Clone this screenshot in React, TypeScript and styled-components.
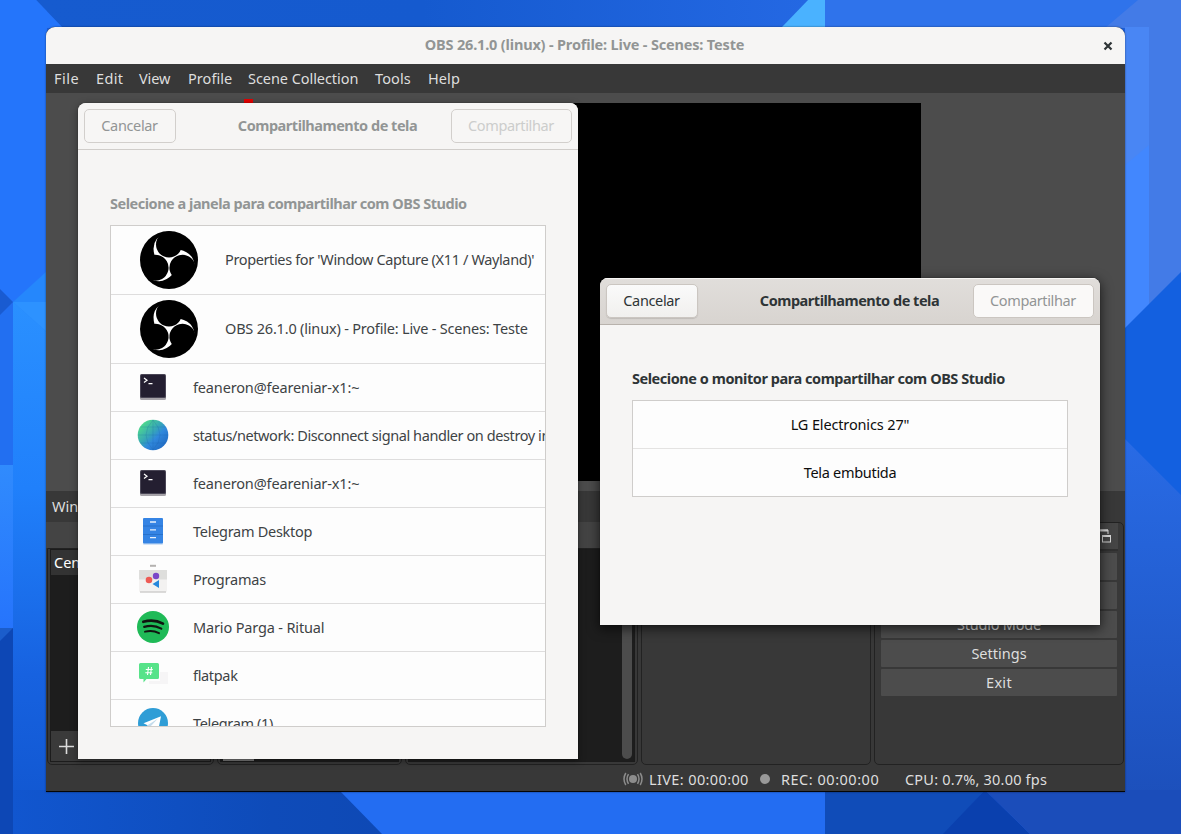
import React from 'react';
import styled, { createGlobalStyle } from 'styled-components';

const Global = createGlobalStyle`
  * { box-sizing: border-box; }
  html, body { margin: 0; padding: 0; overflow: hidden; }
  body { font-family: "Noto Sans", "Open Sans", sans-serif; font-size: 14.5px; }
`;

const Desktop = styled.main`
  position: relative;
  width: 1181px;
  height: 834px;
  overflow: hidden;
  padding: 27px 56px 42px 46px;
  background: #1c5fdc;
`;

const Wallpaper = styled.svg`
  position: absolute;
  inset: 0;
  width: 1181px;
  height: 834px;
`;

const Label = styled.span<{ $ls?: number }>`
  white-space: nowrap;
  letter-spacing: ${(p) => p.$ls ?? 0}px;
`;

/* ---------- main window ---------- */

const MainWindow = styled.section`
  position: relative;
  display: flex;
  flex-direction: column;
  width: 1079px;
  height: 765px;
  border-radius: 9px 9px 0 0;
  overflow: hidden;
  background: #383838;
  border-bottom: 1px solid #050505;
  box-shadow: 0 0 2px rgba(0, 0, 0, 0.55);
`;

const TitleBar = styled.header`
  display: flex;
  align-items: center;
  justify-content: center;
  position: relative;
  height: 37px;
  flex: none;
  background: #f6f5f4;
  color: #929595;
  font: 700 14.5px/20px "Noto Sans", sans-serif;
  padding-bottom: 3px;
  padding-right: 2px;
`;

const CloseButton = styled.button`
  position: absolute;
  right: 7px;
  top: 9px;
  width: 20px;
  height: 20px;
  padding: 0;
  border: 0;
  background: none;
  display: grid;
  place-items: center;
`;

const MenuBar = styled.nav`
  display: flex;
  align-items: center;
  gap: 17px;
  height: 29px;
  flex: none;
  padding: 0 0 2px 8px;
  background: #383838;
  color: #dedede;
  font-size: 14.5px;
`;

const MenuItem = styled.span<{ $w: number; $ls: number }>`
  width: ${(p) => p.$w}px;
  letter-spacing: ${(p) => p.$ls}px;
  white-space: nowrap;
`;

const Preview = styled.div`
  flex: none;
  height: 398px;
  padding: 10px 0 0 203px;
  background: #4c4c4c;
`;

const Scene = styled.div`
  position: relative;
  width: 672px;
  height: 378px;
  background: #000;
`;

const Handle = styled.i`
  position: absolute;
  left: -5px;
  top: -4px;
  width: 9px;
  height: 8px;
  background: #e60000;
`;

const SourceBar = styled.div`
  flex: none;
  height: 31px;
  padding: 5px 6px;
  background: #383838;
  color: #dedede;
  line-height: 21px;
`;

const Docks = styled.div`
  flex: none;
  display: flex;
  gap: 3px;
  height: 243px;
  padding: 0 2px 0 1px;
`;

const Dock = styled.div<{ $w: number }>`
  display: flex;
  flex-direction: column;
  flex: none;
  width: ${(p) => p.$w}px;
`;

const DockTitle = styled.div`
  flex: none;
  height: 26px;
  margin: 0 -3px 0 -3px;
  background: #444;
`;

const DockFrame = styled.div`
  display: flex;
  flex: 1;
  border: 1px solid #222;
  border-radius: 0 0 5px 5px;
  padding: 0 2px 2px;
  background: #383838;
`;

const DockInner = styled.div`
  display: flex;
  flex-direction: column;
  justify-content: space-between;
  flex: 1;
  border: 1px solid #1c1c1c;
  background: #1d1d1d;
  overflow: hidden;
`;

const SceneItem = styled.div`
  height: 25px;
  padding-left: 3px;
  background: #333;
  color: #fff;
  line-height: 25px;
  white-space: nowrap;
`;

const DockTools = styled.div`
  display: flex;
  align-items: center;
  height: 30px;
  padding: 1px 0 0 7px;
  background: #3a3a3a;
`;

const MixerInner = styled(DockInner)`
  flex-direction: row;
  justify-content: flex-end;
  align-items: flex-end;
  padding: 0 2px 2px 0;
`;

const Scrollbar = styled.div`
  width: 10px;
  height: 100%;
  background: #4c4c4c;
  border-radius: 0 0 5px 5px;
`;

const SourcesInner = styled(DockInner)`
  justify-content: flex-end;
  padding-left: 2px;
`;

const HorizontalBar = styled.div`
  width: 31px;
  height: 3px;
  background: #777;
`;

const ControlsDock = styled.div`
  width: 250px;
  flex: none;
  border: 1px solid #222;
  border-radius: 5px;
  display: flex;
  flex-direction: column;
  gap: 2px;
  padding: 0 6px;
`;

const ControlsTitle = styled.div`
  display: flex;
  align-items: center;
  justify-content: flex-end;
  height: 28px;
  margin: 0 -1px 0 -6px;
  padding-right: 6px;
  background: #454545;
  border-bottom: 2px solid #303030;
`;

const ControlButton = styled.button`
  flex: none;
  height: 27px;
  padding: 0 0 1px;
  border: 0;
  border-radius: 1px;
  background: #4c4c4c;
  color: #dedede;
  font: 14.5px/26px "Noto Sans", sans-serif;
`;

const StatusBar = styled.footer`
  display: flex;
  align-items: center;
  flex: 1;
  padding: 1px 0 0 577px;
  color: #dedede;
  font-size: 14.5px;
`;

const StatusItem = styled.span<{ $w: number; $ls: number }>`
  width: ${(p) => p.$w}px;
  letter-spacing: ${(p) => p.$ls}px;
  white-space: nowrap;
  > svg { display: block; }
`;

const RecordDot = styled.i`
  width: 10px;
  height: 10px;
  border-radius: 50%;
  margin-right: 11px;
  background: #999;
`;

/* ---------- dialogs ---------- */

const Dialog = styled.section<{ $x: number; $y: number; $h: number; $active?: boolean }>`
  position: absolute;
  left: ${(p) => p.$x}px;
  top: ${(p) => p.$y}px;
  width: 500px;
  height: ${(p) => p.$h}px;
  display: flex;
  flex-direction: column;
  overflow: hidden;
  border-radius: 8px 8px 0 0;
  background: #f6f5f4;
  color: ${(p) => (p.$active ? '#2e3436' : '#929595')};
  box-shadow: ${(p) =>
    p.$active
      ? '0 3px 12px 1px rgba(0,0,0,.6), 0 0 1px rgba(0,0,0,.8)'
      : '0 2px 7px 1px rgba(0,0,0,.3), 0 0 1px rgba(0,0,0,.7)'};
`;

const DialogBar = styled.header<{ $active?: boolean }>`
  display: grid;
  grid-template-columns: 121px 1fr 121px;
  align-items: center;
  justify-items: center;
  flex: none;
  height: 47px;
  padding: 0 6px;
  background: ${(p) => (p.$active ? 'linear-gradient(#e1dedb, #d8d4d0)' : '#f6f5f4')};
  border-bottom: 1px solid ${(p) => (p.$active ? '#b8b2ac' : '#d0cdca')};
  box-shadow: ${(p) => (p.$active ? 'inset 0 1px #f6f5f3' : 'none')};
`;

const DialogTitle = styled.h1`
  margin: 0 1px 2px 0;
  font: 700 14.5px/20px "Noto Sans", sans-serif;
  letter-spacing: -0.48px;
  white-space: nowrap;
`;

const Button = styled.button<{ $w: number; $active?: boolean; $off?: boolean }>`
  justify-self: start;
  width: ${(p) => p.$w}px;
  height: 34px;
  padding: 0 1px 2px 0;
  border-radius: 5px;
  border: 1px solid ${(p) => (p.$active ? '#cbc6c1' : '#d2cfcc')};
  background: ${(p) =>
    !p.$active ? '#f7f6f5' : p.$off ? '#faf9f8' : 'linear-gradient(#fafafa, #f1f0ee)'};
  box-shadow: ${(p) => (p.$active && !p.$off ? '0 1px 1px rgba(0,0,0,.12)' : 'none')};
  color: ${(p) => (p.$active ? (p.$off ? '#929595' : '#2e3436') : p.$off ? '#cccdcc' : '#929595')};
  font: 14.5px/20px "Noto Sans", sans-serif;
  letter-spacing: -0.36px;
`;

const DialogBody = styled.div`
  display: flex;
  flex-direction: column;
  flex: 1;
  padding: 43px 32px 32px;
`;

const Heading = styled.h2`
  margin: 0 0 11px;
  font: 700 14.5px/21px "Noto Sans", sans-serif;
  white-space: nowrap;
`;

const List = styled.ul<{ $h: number; $w: number }>`
  flex: none;
  list-style: none;
  margin: 0;
  padding: 0;
  width: ${(p) => p.$w}px;
  height: ${(p) => p.$h}px;
  overflow: hidden;
  background: #fdfdfd;
  border: 1px solid #cfcdcb;
`;

const WindowRow = styled.li<{ $large?: boolean }>`
  display: flex;
  align-items: center;
  gap: 24px;
  height: ${(p) => (p.$large ? 69 : 48)}px;
  padding: 0 0 2px 26px;
  border-bottom: 1px solid #dedddd;
  color: #3e4345;
  line-height: 20px;
  > svg { flex: none; }
`;

const MonitorRow = styled.li`
  display: flex;
  align-items: center;
  justify-content: center;
  height: 48px;
  padding-bottom: 2px;
  color: #0d0d0d;
  line-height: 20px;
  &:first-child { border-bottom: 1px solid #e4e3e2; }
`;

/* ---------- icons ---------- */

const ObsIcon = () => (
  <svg width="64" height="64" viewBox="-96 -99 192 192">
    <circle r="87" fill="#000" />
    {[0, 120, 240].map((a) => (
      <path key={a} transform={`rotate(${a})`} fill="#fff" d="M-8-83Q-58-62-43-13L0 6L12-30L-10-50Q-42-62-8-83Z" />
    ))}
    {[0, 120, 240].map((a) => (
      <circle key={a} transform={`rotate(${a})`} cx="0" cy="-46.500" r="39" fill="#000" />
    ))}
  </svg>
);

const TerminalIcon = () => (
  <svg width="32" height="32" viewBox="0 0 32 32">
    <rect x="3" y="5" width="26" height="24" rx="1.500" fill="#a5a2a8" />
    <rect x="3" y="3" width="26" height="24" rx="1.500" fill="#4a4656" />
    <rect x="4" y="4" width="24" height="22" rx="1" fill="#241f31" />
    <path d="M7 7l3 2.200L7 11.400M11.500 12.600h4" fill="none" stroke="#fff" strokeWidth="1.200" />
  </svg>
);

const WebIcon = () => (
  <svg width="32" height="32" viewBox="0 0 32 32">
    <defs>
      <linearGradient id="web" x1="0" y1="0" x2="1" y2="1">
        <stop offset=".12" stopColor="#4fdc8a" />
        <stop offset=".45" stopColor="#36a5b8" />
        <stop offset=".6" stopColor="#3088dc" />
        <stop offset="1" stopColor="#1a5fb8" />
      </linearGradient>
    </defs>
    <circle cx="16" cy="16" r="15.300" fill="url(#web)" />
    <path d="M16 1v30M1 16h30M3.500 8h25M3.500 24h25M16 1Q2 16 16 31M16 1Q30 16 16 31" fill="none" stroke="#185aa0" strokeOpacity=".2" />
  </svg>
);

const FilesIcon = () => (
  <svg width="32" height="32" viewBox="0 -1 32 32">
    <rect x="6" y="3" width="20" height="26" rx="1" fill="#d3e3f5" />
    <rect x="6" y="2" width="20" height="25.500" rx="1" fill="#3584e4" />
    <path d="M6 10h20M6 18.500h20" stroke="#1f65bb" strokeOpacity=".6" />
    <path d="M13 6h6M13 13.800h6M13 21.600h6" stroke="#e8f1fc" strokeWidth="1.300" />
  </svg>
);

const SoftwareIcon = () => (
  <svg width="32" height="32" viewBox="0 -1 32 32">
    <path d="M13 1.800h6" stroke="#b4b2b0" strokeWidth="2" />
    <rect x="2" y="6" width="28" height="22" rx="1" fill="#f3f2f1" />
    <path d="M2 6h28v9.500H2z" fill="#dededc" />
    <path d="M3 28h26" stroke="#cfcecc" strokeWidth="1.500" />
    <circle cx="12" cy="16" r="3.300" fill="#ee5b55" />
    <circle cx="19" cy="12" r="3.200" fill="#7947c8" />
    <path d="M22 16v8l-6.500-4z" fill="#2788dd" />
  </svg>
);

const SpotifyIcon = () => (
  <svg width="32" height="32" viewBox="0 0 32 32">
    <circle cx="16" cy="16" r="16" fill="#1fba57" />
    <g fill="none" stroke="#101510" strokeLinecap="round">
      <path d="M6.300 10.800Q17 7.700 26 12.700" strokeWidth="2.600" />
      <path d="M7.200 15.900Q16.500 13.300 24.300 17.600" strokeWidth="2.200" />
      <path d="M8 20.700Q15.500 18.600 22 22.200" strokeWidth="1.900" />
    </g>
  </svg>
);

const ChatIcon = () => (
  <svg width="32" height="32" viewBox="0 -1 32 32">
    <path d="M23 12h8v12H12v-3h11z" fill="#f6f5f6" />
    <path d="M3.500 3h17q1.500 0 1.500 1.500v13q0 1.500-1.500 1.500H9.500l-3 3.500V19h-3Q2 19 2 17.500v-13Q2 3 3.500 3z" fill="#57e389" />
    <path d="M11.500 7l-1 8M14.500 7l-1 8M8.800 9.500h7M8.300 12.700h7" stroke="#fff" strokeWidth="1.100" />
  </svg>
);

const TelegramIcon = () => (
  <svg width="32" height="32" viewBox="0 0 32 32">
    <circle cx="16" cy="16" r="15" fill="#2f9dd6" />
    <path d="M6.500 16.300l17.500-7-3 15-6-4-3.500 3-1-5z" fill="#fff" />
    <path d="M10.500 18.300L21 11.500l-8 8.500-1.500 3.300z" fill="#c5dcec" />
  </svg>
);

const FloatIcon = () => (
  <svg width="15" height="16" viewBox="0 0 15 16" fill="none" stroke="#d8d8d8">
    <path d="M1 9V2h10v4" strokeWidth="1" />
    <path d="M1 2.500h10" strokeWidth="2" />
    <rect x="5.500" y="7.500" width="8" height="6.500" />
    <path d="M5 8h9" strokeWidth="2" />
  </svg>
);

const LiveIcon = () => (
  <svg width="20" height="14" viewBox="0 0 20 14" fill="none" stroke="#8c8c8c" strokeWidth="1.500">
    <circle cx="10" cy="7" r="4" fill="#8c8c8c" stroke="none" />
    <path d="M5.500 2.200Q2.500 7 5.500 11.800M14.500 2.200Q17.500 7 14.500 11.800M2.800 1Q-.8 7 2.800 13M17.200 1Q20.800 7 17.200 13" />
  </svg>
);

const PlusIcon = () => (
  <svg width="17" height="17" viewBox="0 0 17 17">
    <path d="M8.500 1v15M1 8.500h15" stroke="#dcdcdc" strokeWidth="1.600" />
  </svg>
);

const menu: [string, number, number][] = [
  ['File', 25, 0.5], ['Edit', 26, 0.35], ['View', 32, -0.1], ['Profile', 43, 0.05],
  ['Scene Collection', 110, -0.06], ['Tools', 36, 0.1], ['Help', 32, 0.1],
];

const windows: { icon: React.FC; text: string; ls: number; large?: boolean }[] = [
  { icon: ObsIcon, text: "Properties for 'Window Capture (X11 / Wayland)'", ls: -0.37, large: true },
  { icon: ObsIcon, text: 'OBS 26.1.0 (linux) - Profile: Live - Scenes: Teste', ls: -0.19, large: true },
  { icon: TerminalIcon, text: 'feaneron@feareniar-x1:~', ls: -0.15 },
  { icon: WebIcon, text: 'status/network: Disconnect signal handler on destroy in', ls: -0.41 },
  { icon: TerminalIcon, text: 'feaneron@feareniar-x1:~', ls: -0.15 },
  { icon: FilesIcon, text: 'Telegram Desktop', ls: -0.28 },
  { icon: SoftwareIcon, text: 'Programas', ls: -0.18 },
  { icon: SpotifyIcon, text: 'Mario Parga - Ritual', ls: -0.15 },
  { icon: ChatIcon, text: 'flatpak', ls: -0.33 },
  { icon: TelegramIcon, text: 'Telegram (1)', ls: -0.35 },
];

const Background = () => (
  <Wallpaper viewBox="0 0 1181 834" preserveAspectRatio="none">
    <defs>
      <linearGradient id="top" x1="0" x2="1"><stop offset="0" stopColor="#165bcf" /><stop offset=".5" stopColor="#155acf" /><stop offset="1" stopColor="#2468e3" /></linearGradient>
      <linearGradient id="left" x1="0" x2="0" y1="0" y2="1"><stop offset="0" stopColor="#2a90ff" /><stop offset=".35" stopColor="#2080fb" /><stop offset=".7" stopColor="#1762e0" /><stop offset="1" stopColor="#1055ce" /></linearGradient>
      <linearGradient id="right" x1="0" x2="0" y1="0" y2="1"><stop offset="0" stopColor="#2a6eea" /><stop offset="1" stopColor="#1b4db7" /></linearGradient>
      <linearGradient id="tile" x1="0" x2="0" y1="0" y2="1"><stop offset="0" stopColor="#308bfd" /><stop offset="1" stopColor="#2674fc" /></linearGradient>
      <linearGradient id="floor" x1="0" x2="1"><stop offset="0" stopColor="#1156cf" /><stop offset=".7" stopColor="#0e4bb9" /><stop offset="1" stopColor="#0e49b5" /></linearGradient>
    </defs>
    <path d="M0 0H47V302H0z" fill="#2475fb" />
    <path d="M36 0H808L781 28H63z" fill="url(#top)" />
    <path d="M0 0H36L63 28H0z" fill="#2475fb" />
    <path d="M808 0H825V28H781z" fill="#4ab2ff" />
    <path d="M825 0H1149V28H825z" fill="#2f73eb" />
    <path d="M1105 28L1138 0H1181V280H1125V28z" fill="#437be7" />
    <path d="M1125 27H1149V340H1125z" fill="#4986f4" />
    <path d="M1125 165L1149 145V340H1125z" fill="#4287fe" />
    <path d="M1149 272H1181V304H1149z" fill="#437be7" />
    <path d="M0 302H13V465H0z" fill="#226ff1" />
    <path d="M13 302H47V834H13z" fill="url(#left)" />
    <path d="M13 302L47 271V332z" fill="#2587fc" />
    <path d="M13 302H47V332z" fill="#2d92ff" />
    <path d="M0 289L13 302L0 315z" fill="#195bd1" />
    <path d="M0 465H13V628H0z" fill="url(#tile)" />
    <path d="M0 628H13V834H0z" fill="#0d47b5" />
    <path d="M0 628H13L0 641z" fill="#1b5dcb" />
    <path d="M1125 400H1181V834H1125z" fill="url(#right)" />
    <path d="M1181 272L1125 328V439L1181 495z" fill="#1360e0" />
    <path d="M13 790H341L383 834H13z" fill="url(#floor)" />
    <path d="M339 790H825V834H382z" fill="#236df2" />
    <path d="M825 790H985L945 834H825z" fill="#104cb8" />
    <path d="M985 790L1030 834H943z" fill="#0a40ae" />
    <path d="M985 790H1181V834H1030z" fill="#1b4dba" />
  </Wallpaper>
);

export default function App() {
  return (
    <Desktop>
      <Global />
      <Background />
      <MainWindow>
        <TitleBar>
          <Label $ls={-0.17}>OBS 26.1.0 (linux) - Profile: Live - Scenes: Teste</Label>
          <CloseButton aria-label="Close">
            <svg width="10" height="10" viewBox="0 0 10 10">
              <path d="M1.500 1.500l7 7M8.500 1.500l-7 7" stroke="#2e3436" strokeWidth="2.200" />
            </svg>
          </CloseButton>
        </TitleBar>
        <MenuBar>
          {menu.map(([name, w, ls]) => (
            <MenuItem key={name} $w={w} $ls={ls}>{name}</MenuItem>
          ))}
        </MenuBar>
        <Preview>
          <Scene><Handle /></Scene>
        </Preview>
        <SourceBar>Win</SourceBar>
        <Docks>
          <Dock $w={167}>
            <DockTitle />
            <DockFrame>
              <DockInner>
                <SceneItem>Cena</SceneItem>
                <DockTools><PlusIcon /></DockTools>
              </DockInner>
            </DockFrame>
          </Dock>
          <Dock $w={185}>
            <DockTitle />
            <DockFrame><SourcesInner><HorizontalBar /></SourcesInner></DockFrame>
          </Dock>
          <Dock $w={233}>
            <DockTitle />
            <DockFrame><MixerInner><Scrollbar /></MixerInner></DockFrame>
          </Dock>
          <Dock $w={230}>
            <DockTitle />
            <DockFrame />
          </Dock>
          <ControlsDock>
            <ControlsTitle><FloatIcon /></ControlsTitle>
            <ControlButton />
            <ControlButton />
            <ControlButton><Label $ls={-0.22}>Studio Mode</Label></ControlButton>
            <ControlButton>Settings</ControlButton>
            <ControlButton><Label $ls={0.3}>Exit</Label></ControlButton>
          </ControlsDock>
        </Docks>
        <StatusBar>
          <StatusItem $w={26} $ls={0}><LiveIcon /></StatusItem>
          <StatusItem $w={111} $ls={0.38}>LIVE: 00:00:00</StatusItem>
          <RecordDot />
          <StatusItem $w={124} $ls={0.52}>REC: 00:00:00</StatusItem>
          <StatusItem $w={150} $ls={0.2}>CPU: 0.7%, 30.00 fps</StatusItem>
        </StatusBar>
      </MainWindow>

      <Dialog $x={78} $y={103} $h={656}>
        <DialogBar>
          <Button $w={92}>Cancelar</Button>
          <DialogTitle>Compartilhamento de tela</DialogTitle>
          <Button $w={121} $off>Compartilhar</Button>
        </DialogBar>
        <DialogBody>
          <Heading><Label $ls={-0.48}>Selecione a janela para compartilhar com OBS Studio</Label></Heading>
          <List $w={436} $h={502}>
            {windows.map(({ icon: Icon, text, ls, large }, i) => (
              <WindowRow key={i} $large={large}>
                <Icon />
                <Label $ls={ls}>{text}</Label>
              </WindowRow>
            ))}
          </List>
        </DialogBody>
      </Dialog>

      <Dialog $x={600} $y={278} $h={347} $active>
        <DialogBar $active>
          <Button $w={92} $active>Cancelar</Button>
          <DialogTitle>Compartilhamento de tela</DialogTitle>
          <Button $w={121} $active $off>Compartilhar</Button>
        </DialogBar>
        <DialogBody>
          <Heading><Label $ls={-0.45}>Selecione o monitor para compartilhar com OBS Studio</Label></Heading>
          <List $w={436} $h={97}>
            <MonitorRow><Label $ls={-0.14}>LG Electronics 27"</Label></MonitorRow>
            <MonitorRow><Label $ls={-0.3}>Tela embutida</Label></MonitorRow>
          </List>
        </DialogBody>
      </Dialog>
    </Desktop>
  );
}
